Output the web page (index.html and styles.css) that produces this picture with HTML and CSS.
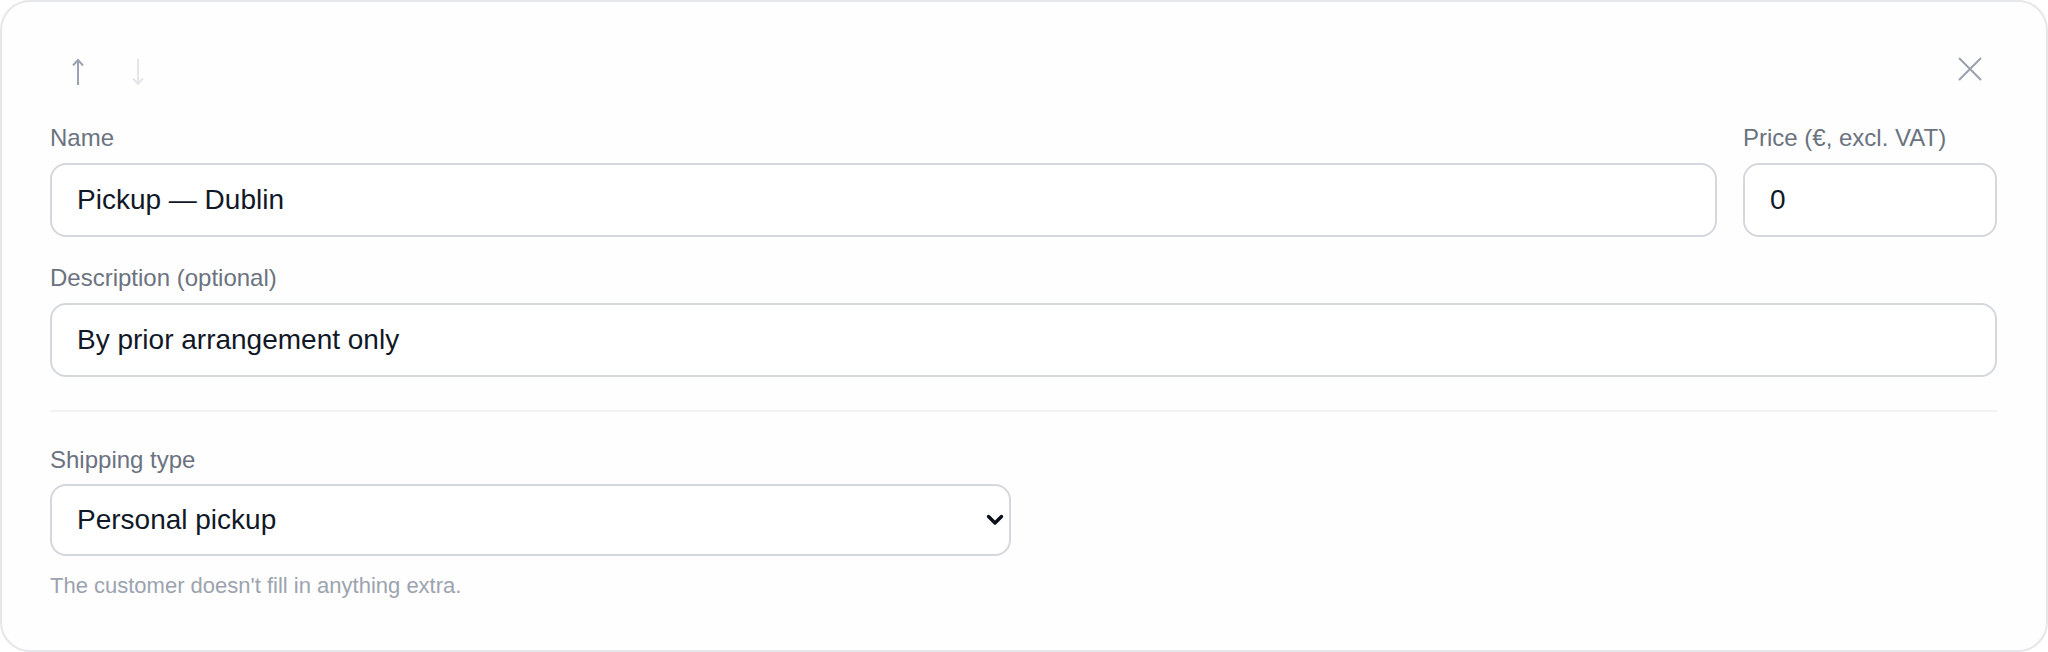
FILE: index.html
```html
<!DOCTYPE html>
<html lang="en">
<head>
<meta charset="utf-8">
<title>Shipping method</title>
<link rel="stylesheet" href="styles.css">
</head>
<body>
<div class="card">
  <div class="header">
    <div class="moves">
      <button class="icon-btn move up" type="button" aria-label="Move up">
        <svg width="12" height="28" viewBox="0 0 12 28" fill="none"><path d="M6 27V2M1 7.5L6 2l5 5.5" stroke="currentColor" stroke-width="2"/></svg>
      </button>
      <button class="icon-btn move down" type="button" aria-label="Move down">
        <svg width="12" height="28" viewBox="0 0 12 28" fill="none"><path d="M6 1v25M1 20.5L6 26l5-5.5" stroke="currentColor" stroke-width="2"/></svg>
      </button>
    </div>
    <button class="icon-btn close" type="button" aria-label="Remove">
      <svg width="24" height="24" viewBox="0 0 24 24" fill="none"><path d="M1 1l22 22M23 1L1 23" stroke="currentColor" stroke-width="2"/></svg>
    </button>
  </div>

  <div class="row row-name">
    <div class="field">
      <label class="label">Name</label>
      <div class="input">Pickup — Dublin</div>
    </div>
    <div class="field">
      <label class="label">Price (€, excl. VAT)</label>
      <div class="input">0</div>
    </div>
  </div>

  <div class="field field-desc">
    <label class="label">Description (optional)</label>
    <div class="input">By prior arrangement only</div>
  </div>

  <div class="divider"></div>

  <div class="row row-type">
    <div class="field">
      <label class="label">Shipping type</label>
      <div class="select-wrap">
        <div class="input select">Personal pickup</div>
        <svg class="chevron" width="18" height="12" viewBox="0 0 18 12" fill="none"><path d="M2.5 2.5L9 9l6.5-6.5" stroke="#0b0f19" stroke-width="3.4" stroke-linecap="round" stroke-linejoin="round"/></svg>
      </div>
      <p class="help">The customer doesn't fill in anything extra.</p>
    </div>
  </div>
</div>
</body>
</html>
```

FILE: styles.css
```css
* { box-sizing: border-box; }
html, body { margin: 0; padding: 0; background: #ffffff; }
body {
  font-family: "Liberation Sans", Arial, Helvetica, sans-serif;
  width: 2048px;
  height: 652px;
  overflow: hidden;
}
.card {
  width: 2048px;
  height: 652px;
  border: 2px solid #e6e7eb;
  border-radius: 30px;
  background: #fefefe;
  padding: 48px 49px 48px 48px;
  display: flex;
  flex-direction: column;
}
.header {
  display: flex;
  justify-content: space-between;
  align-items: flex-start;
  height: 44px;
  margin-bottom: 28px;
}
.moves { display: flex; gap: 4px; }
.icon-btn {
  border: 0;
  background: transparent;
  padding: 0;
  margin: 0;
  display: flex;
  align-items: center;
  justify-content: center;
  cursor: pointer;
}
.move { width: 56px; height: 44px; }
.move svg { display: block; }
.up { color: #9aa3b2; }
.down { color: #e2e5ea; }
.close { width: 54px; height: 38px; color: #9aa1ad; }
.row-name {
  display: grid;
  grid-template-columns: 1fr 254px;
  gap: 26px;
}
.field { display: flex; flex-direction: column; }
.label {
  font-size: 24px;
  line-height: 32px;
  color: #6b7280;
  margin-bottom: 9px;
}
.input {
  height: 74px;
  border: 2px solid #d4d7dd;
  border-radius: 16px;
  background: #ffffff;
  padding: 0 25px;
  display: flex;
  align-items: center;
  font-size: 28px;
  color: #111827;
}
.field-desc { margin-top: 25px; }
.field-desc .label { margin-bottom: 9px; }
.divider {
  height: 2px;
  background: #f1f2f4;
  margin-top: 33px;
}
.row-type {
  display: grid;
  grid-template-columns: 1fr 1fr;
  gap: 26px;
  margin-top: 32px;
}
.row-type .label { margin-bottom: 8px; }
.select-wrap { position: relative; }
.select { height: 72px; }
.chevron {
  position: absolute;
  right: 7px;
  top: 30px;
}
.help {
  margin: 15px 0 0;
  font-size: 22px;
  line-height: 30px;
  color: #9ca3af;
}
```
